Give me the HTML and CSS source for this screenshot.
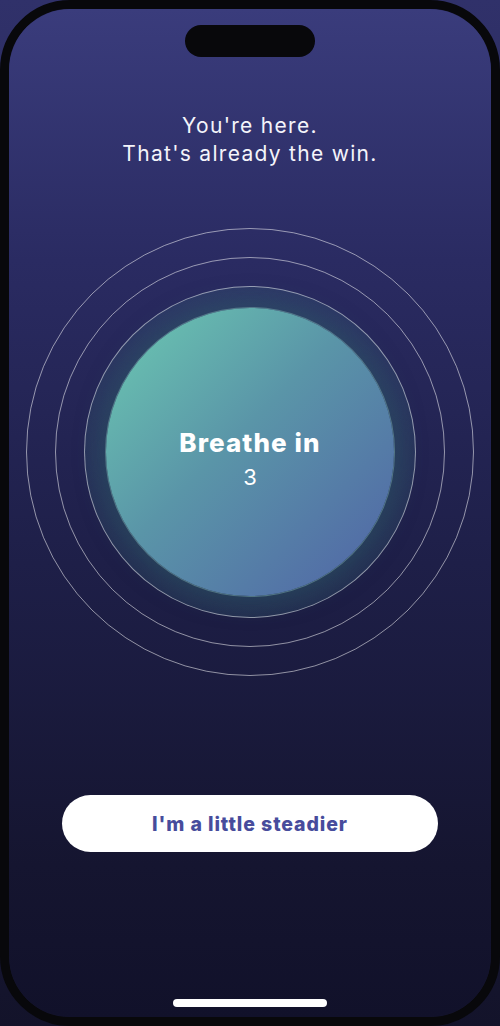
FILE: index.html
```html
<!DOCTYPE html>
<html lang="en">
<head>
    <meta charset="UTF-8">
    <meta name="viewport" content="width=device-width, initial-scale=1.0">
    <title>Breathe</title>
    <link rel="stylesheet" href="styles.css">
</head>
<body>
    <div class="phone">
        <div class="screen">
            <div class="island"></div>

            <h1 class="title">You're here.<br>That's already the win.</h1>

            <!-- Breathing rings -->
            <div class="breath">
                <div class="ring ring-outer">
                    <div class="ring ring-mid">
                        <div class="ring ring-inner">
                            <div class="core">
                                <div class="core-label">Breathe in</div>
                                <div class="core-count">3</div>
                            </div>
                        </div>
                    </div>
                </div>
            </div>

            <button class="steady-btn">I'm a little steadier</button>

            <div class="home-bar"></div>
        </div>
    </div>
</body>
</html>
```

FILE: styles.css
```css
* {
    margin: 0;
    padding: 0;
    box-sizing: border-box;
    font-family: 'Inter', 'Noto Sans', sans-serif;
}

body {
    background: linear-gradient(180deg, #30316a 0%, #13132a 100%);
    width: 500px;
    height: 1026px;
    overflow: hidden;
}

.phone {
    width: 500px;
    height: 1026px;
    border: 9px solid #08080b;
    border-radius: 70px;
    overflow: hidden;
}

.screen {
    height: 100%;
    border-radius: 61px;
    background: linear-gradient(180deg, #3a3c7c 0%, #2a2b62 25%, #1e1f48 55%, #151530 85%, #11112a 100%);
    display: flex;
    flex-direction: column;
    align-items: center;
    color: #ffffff;
}

.island {
    width: 130px;
    height: 32px;
    border-radius: 16px;
    background-color: #08080b;
    margin-top: 16px;
}

.title {
    margin-top: 55px;
    font-size: 21px;
    font-weight: 400;
    line-height: 28px;
    letter-spacing: 1.3px;
    text-align: center;
    color: #f4f4fa;
}

.breath {
    margin-top: 60px;
}

.ring {
    border-radius: 50%;
    border: 1px solid rgba(255, 255, 255, 0.52);
    display: flex;
    align-items: center;
    justify-content: center;
}

.ring-outer {
    width: 448px;
    height: 448px;
}

.ring-mid {
    width: 390px;
    height: 390px;
}

.ring-inner {
    width: 332px;
    height: 332px;
    background: radial-gradient(circle, rgba(70, 130, 140, 0.24) 60%, rgba(70, 130, 140, 0) 100%);
}

.core {
    width: 288px;
    height: 288px;
    border-radius: 50%;
    background: linear-gradient(135deg, #6ccab2 0%, #5a95a8 45%, #5062a6 100%);
    box-shadow: 0 0 0 1px rgba(160, 220, 210, 0.35), 0 0 24px 6px rgba(40, 80, 95, 0.5);
    display: flex;
    flex-direction: column;
    align-items: center;
    justify-content: center;
    padding-top: 16px;
}

.core-label {
    font-size: 26px;
    font-weight: 800;
    line-height: 34px;
    letter-spacing: 1.1px;
}

.core-count {
    font-size: 22px;
    font-weight: 400;
    line-height: 34px;
}

.steady-btn {
    margin-top: 119px;
    width: 376px;
    height: 57px;
    border: none;
    border-radius: 29px;
    background-color: #ffffff;
    color: #474c9c;
    font-size: 19.5px;
    font-weight: 800;
    letter-spacing: 0.9px;
    cursor: pointer;
}

.home-bar {
    margin-top: auto;
    margin-bottom: 10px;
    width: 154px;
    height: 8px;
    border-radius: 4px;
    background-color: #ffffff;
}
```
